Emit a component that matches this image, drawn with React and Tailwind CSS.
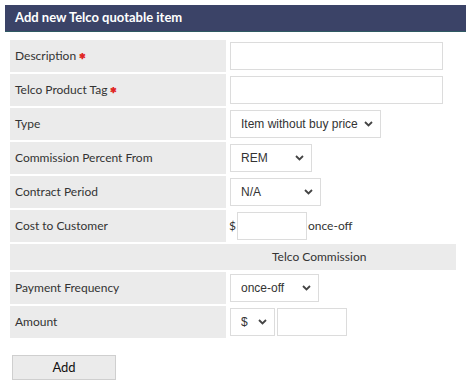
import React from "react";

const Chevron = () => (
  <svg width="9" height="6" viewBox="0 0 9 6" className="pointer-events-none absolute right-[8px] top-1/2 -translate-y-1/2">
    <path d="M1 1l3.5 3.5L8 1" fill="none" stroke="#444" strokeWidth="1.8" />
  </svg>
);

const Select = ({ width, value }) => (
  <div className={`relative ${width} h-[28px]`}>
    <select
      defaultValue={value}
      className="h-full w-full appearance-none border border-[#dcdcdc] bg-white pl-[10px] text-[12px] text-[#333] outline-none [font-family:'Liberation_Sans',Arial,sans-serif]"
    >
      <option>{value}</option>
    </select>
    <Chevron />
  </div>
);

const Required = () => <span className="ml-[3px] text-[8px] font-bold text-[#e02424]">✱</span>;

const Row = ({ label, children }) => (
  <>
    <div className="flex h-[32px] items-center bg-[#ebebeb] pl-[5px]">{label}</div>
    <div className="flex h-[32px] items-center pl-[2px]">{children}</div>
  </>
);

export default function App() {
  return (
    <div className="min-h-screen bg-white p-[5px] pr-0 text-[12px] text-[#333] [font-family:Lato,'Noto_Sans',sans-serif]">
      <div className="flex h-[27px] items-center border-b border-[#2f5a63] bg-[#3b4367] pl-[10px] text-[13px] font-bold text-white">
        Add new Telco quotable item
      </div>

      <div className="ml-[5px] mt-[8px] grid w-[446px] grid-cols-[216px_228px] gap-[2px]">
        <Row label={<>Description<Required /></>}>
          <input className="h-[28px] w-[213px] border border-[#dcdcdc] outline-none" />
        </Row>
        <Row label={<>Telco Product Tag<Required /></>}>
          <input className="h-[28px] w-[213px] border border-[#dcdcdc] outline-none" />
        </Row>
        <Row label="Type">
          <Select width="w-[151px]" value="Item without buy price" />
        </Row>
        <Row label="Commission Percent From">
          <Select width="w-[82px]" value="REM" />
        </Row>
        <Row label="Contract Period">
          <Select width="w-[91px]" value="N/A" />
        </Row>
        <Row label="Cost to Customer">
          <span className="-ml-[1px]">$</span>
          <input className="ml-[1px] h-[28px] w-[70px] border border-[#dcdcdc] outline-none" />
          <span className="ml-[1px]">once-off</span>
        </Row>
        <div className="col-span-2 flex h-[26px] items-center bg-[#ebebeb] pl-[262px]">Telco Commission</div>
        <Row label="Payment Frequency">
          <Select width="w-[89px]" value="once-off" />
        </Row>
        <Row label="Amount">
          <div className="flex gap-[2px]">
            <Select width="w-[45px]" value="$" />
            <input className="h-[28px] w-[70px] border border-[#dcdcdc] outline-none" />
          </div>
        </Row>
      </div>

      <button className="ml-[7px] mt-[17px] h-[25px] w-[104px] border border-[#cfcfcf] bg-[#ebebeb] text-[13px] text-[#111]">
        Add
      </button>
    </div>
  );
}
